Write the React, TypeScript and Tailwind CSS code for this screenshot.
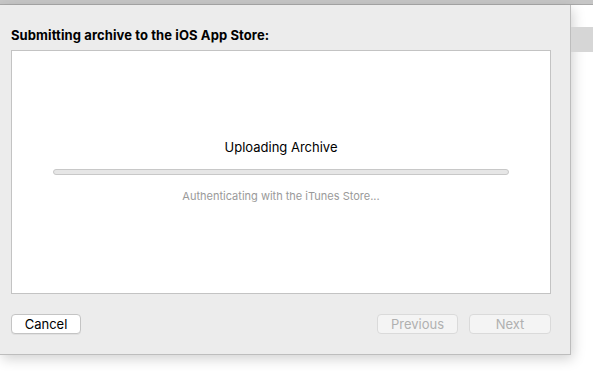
export default function App() {
  return (
    <div className="relative h-[371px] w-[593px] overflow-hidden bg-white" style={{ fontFamily: "Inter, 'Liberation Sans', sans-serif" }}>
      {/* window title strip above the sheet */}
      <div className="h-[5px] w-full border-b border-[#a9a9a9] bg-[#c6c6c6]" />

      <div className="flex">
        {/* sheet */}
        <div className="flex h-[350px] w-[571px] flex-col border-r border-b border-[#bdbdbd] bg-[#ececec] shadow-[2px_4px_12px_rgba(0,0,0,0.18)]">
          <div className="pl-[11px] pt-[22px] text-[13px] font-bold leading-[16px] tracking-[0.1px] text-black">
            Submitting archive to the iOS App Store:
          </div>

          <div className="ml-[11px] mt-[7px] h-[244px] w-[540px] border border-[#c3c3c3] bg-white">
            <div className="flex flex-col items-center pt-[88px]">
              <div className="text-[13px] leading-[16px] text-black">Uploading Archive</div>
              <div className="mt-[14px] h-[6px] w-[456px] rounded-full border border-[#c8c8c8] bg-[#e6e6e6]" />
              <div className="mt-[14px] text-[11px] leading-[14px] text-[#9a9a9a]">
                Authenticating with the iTunes Store...
              </div>
            </div>
          </div>

          <div className="mt-[20px] flex items-center pl-[11px] pr-[19px]">
            <button className="h-[20px] w-[70px] rounded-[4px] border border-[#c4c4c4] bg-white text-[13px] leading-[18px] text-black shadow-[0_1px_0_rgba(0,0,0,0.05)]">
              Cancel
            </button>
            <div className="flex-1" />
            <button className="h-[20px] w-[81px] rounded-[4px] border border-[#dadada] bg-[#f4f4f4] text-[13px] leading-[18px] text-[#b0b0b0]">
              Previous
            </button>
            <button className="ml-[11px] h-[20px] w-[82px] rounded-[4px] border border-[#dadada] bg-[#f4f4f4] text-[13px] leading-[18px] text-[#b0b0b0]">
              Next
            </button>
          </div>
        </div>

        {/* background window content to the right */}
        <div className="flex-1">
          <div className="mt-[22px] h-[25px] bg-[#d6d6d6]" />
        </div>
      </div>
    </div>
  );
}
